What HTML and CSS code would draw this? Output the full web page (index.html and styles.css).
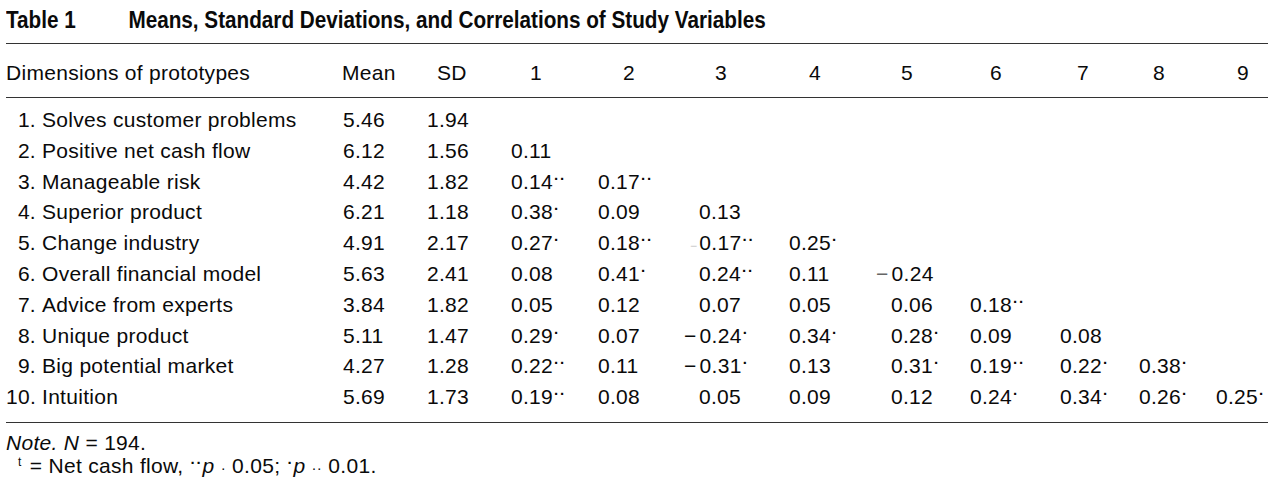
FILE: index.html
```html
<!DOCTYPE html>
<html lang="en">
<head>
<meta charset="utf-8">
<title>Table 1</title>
<link rel="stylesheet" href="styles.css">
</head>
<body>
<div class="sheet">
  <div class="title"><div class="title-in"><span class="tag">Table 1</span><span>Means, Standard Deviations, and Correlations of Study Variables</span></div></div>
  <div class="rule"></div>
  <div class="grid head">
    <div class="lab">Dimensions of prototypes</div>
    <div class="hm">Mean</div>
    <div class="hsd">SD</div>
    <div class="h1">1</div>
    <div class="h2">2</div>
    <div class="h3">3</div>
    <div class="h4">4</div>
    <div class="h5">5</div>
    <div class="h6">6</div>
    <div class="h7">7</div>
    <div class="h8">8</div>
    <div class="h9">9</div>
  </div>
  <div class="rule"></div>
  <div class="body">
    <div class="grid row"><div class="lab"><span class="n">1.</span>Solves customer problems</div><div>5.46</div><div>1.94</div></div>
    <div class="grid row"><div class="lab"><span class="n">2.</span>Positive net cash flow</div><div>6.12</div><div>1.56</div><div>0.11</div></div>
    <div class="grid row"><div class="lab"><span class="n">3.</span>Manageable risk</div><div>4.42</div><div>1.82</div><div>0.14<span class="sig">··</span></div><div>0.17<span class="sig">··</span></div></div>
    <div class="grid row"><div class="lab"><span class="n">4.</span>Superior product</div><div>6.21</div><div>1.18</div><div>0.38<span class="sig">·</span></div><div>0.09</div><div>0.13</div></div>
    <div class="grid row"><div class="lab"><span class="n">5.</span>Change industry</div><div>4.91</div><div>2.17</div><div>0.27<span class="sig">·</span></div><div>0.18<span class="sig">··</span></div><div><span class="neg faint">−</span>0.17<span class="sig">··</span></div><div>0.25<span class="sig">·</span></div></div>
    <div class="grid row"><div class="lab"><span class="n">6.</span>Overall financial model</div><div>5.63</div><div>2.41</div><div>0.08</div><div>0.41<span class="sig">·</span></div><div>0.24<span class="sig">··</span></div><div>0.11</div><div><span class="neg grey">−</span>0.24</div></div>
    <div class="grid row"><div class="lab"><span class="n">7.</span>Advice from experts</div><div>3.84</div><div>1.82</div><div>0.05</div><div>0.12</div><div>0.07</div><div>0.05</div><div>0.06</div><div>0.18<span class="sig">··</span></div></div>
    <div class="grid row"><div class="lab"><span class="n">8.</span>Unique product</div><div>5.11</div><div>1.47</div><div>0.29<span class="sig">·</span></div><div>0.07</div><div><span class="neg">−</span>0.24<span class="sig">·</span></div><div>0.34<span class="sig">·</span></div><div>0.28<span class="sig">·</span></div><div>0.09</div><div>0.08</div></div>
    <div class="grid row"><div class="lab"><span class="n">9.</span>Big potential market</div><div>4.27</div><div>1.28</div><div>0.22<span class="sig">··</span></div><div>0.11</div><div><span class="neg">−</span>0.31<span class="sig">·</span></div><div>0.13</div><div>0.31<span class="sig">·</span></div><div>0.19<span class="sig">··</span></div><div>0.22<span class="sig">·</span></div><div>0.38<span class="sig">·</span></div></div>
    <div class="grid row"><div class="lab"><span class="n">10.</span>Intuition</div><div>5.69</div><div>1.73</div><div>0.19<span class="sig">··</span></div><div>0.08</div><div>0.05</div><div>0.09</div><div>0.12</div><div>0.24<span class="sig">·</span></div><div>0.34<span class="sig">·</span></div><div>0.26<span class="sig">·</span></div><div>0.25<span class="sig">·</span></div></div>
  </div>
  <div class="rule"></div>
  <div class="notes">
    <div><i>Note.</i> <i>N</i> = 194.</div>
    <div class="foot"><span class="dag">t</span> = Net cash flow, <span class="sig">··</span><i>p</i> <span class="lt">·</span>  0.05; <span class="sig">·</span><i>p</i> <span class="lt">··</span> 0.01.</div>
  </div>
</div>
</body>
</html>
```

FILE: styles.css
```css
body {
  margin: 0;
  background: #ffffff;
  color: #0a0a0a;
  font-family: "Liberation Sans", Arial, sans-serif;
}

.sheet {
  padding-left: 6px;
  width: 1262px;
}

.title {
  height: 43px;
  box-sizing: border-box;
  padding-top: 7px;
  font-weight: 700;
  font-size: 23px;
  line-height: 26px;
  white-space: nowrap;
}

.title-in {
  display: flex;
  transform: scaleX(0.9);
  transform-origin: left center;
}

.title .tag {
  width: 136px;
  flex: none;
}

.rule {
  height: 1px;
  background: #333333;
}

.grid {
  display: grid;
  grid-template-columns: 337px 84px 84px 87px 101px 90px 102px 79px 90px 79px 77px 1fr;
  font-size: 21px;
  letter-spacing: 0.3px;
  white-space: nowrap;
}

.head {
  padding: 16px 0 11px;
  line-height: 26px;
}

.hm { margin-left: -1px; }
.hsd { padding-left: 10px; }
.h1 { padding-left: 19px; }
.h2 { padding-left: 25px; }
.h3 { padding-left: 16px; }
.h4 { padding-left: 20px; }
.h5 { padding-left: 10px; }
.h6 { padding-left: 20px; }
.h7 { padding-left: 17px; }
.h8 { padding-left: 14px; }
.h9 { padding-left: 21px; }

.body {
  padding: 7px 0 9px;
}

.row {
  height: 30.8px;
  line-height: 30.8px;
}

.lab .n {
  display: inline-block;
  width: 30px;
  margin-right: 6px;
  text-align: right;
}

.sig {
  font-size: 15px;
  font-weight: 700;
  line-height: 0;
  vertical-align: 5px;
  margin-left: 1px;
  letter-spacing: 1px;
}

.neg {
  margin-left: -15px;
  margin-right: 3px;
}

.neg.grey {
  color: #666666;
}

.neg.faint {
  color: #c8c8c8;
  font-size: 12px;
  margin-left: -9px;
  margin-right: 2px;
}

.notes {
  padding-top: 8px;
  font-size: 21px;
  line-height: 23px;
  letter-spacing: 0.3px;
}

.foot {
  padding-left: 12px;
}

.foot .dag {
  font-size: 12px;
  line-height: 0;
  vertical-align: 7px;
  margin-right: 2px;
}

.foot .lt {
  font-size: 15px;
}
```
